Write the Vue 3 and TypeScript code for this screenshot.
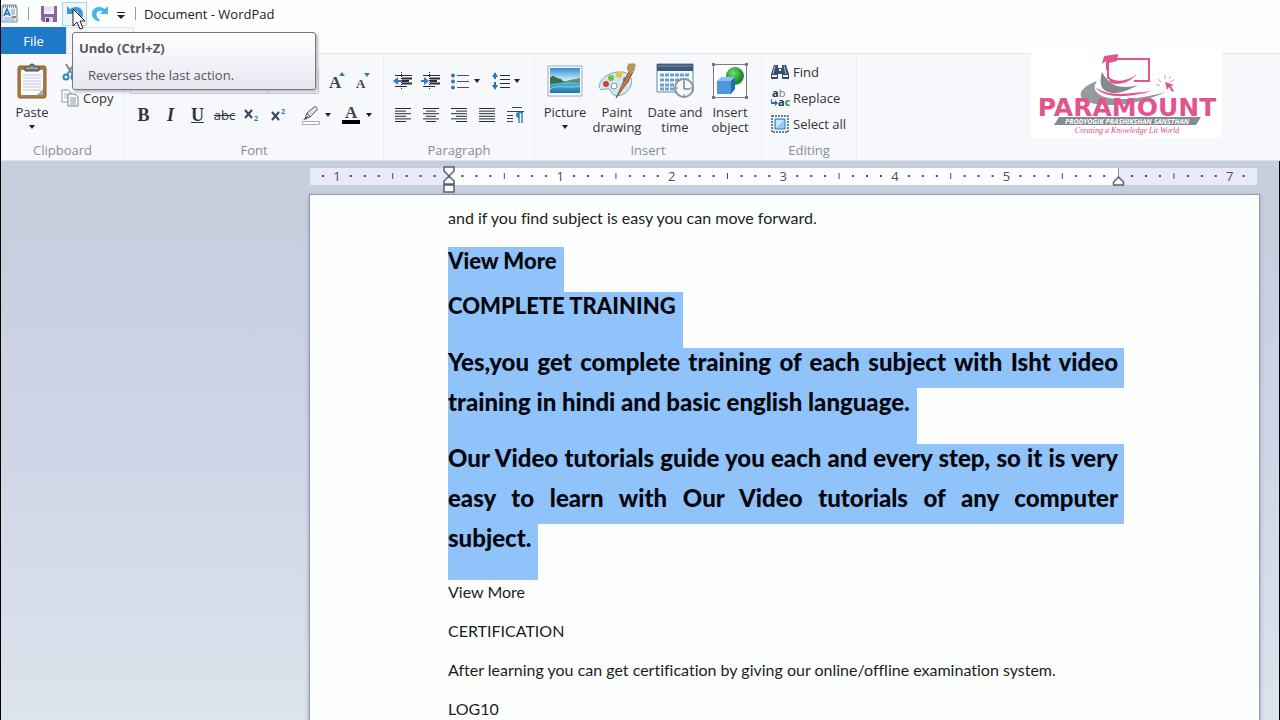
<script setup lang="ts">
interface Tick { x: number; kind: 'dot' | 'half' | 'number'; label: string }

const inch = 111.6
const origin = 138.5
const ticks: Tick[] = []
for (let i = -9; i <= 57; i++) {
  if (i === 0 || i === 48) continue
  const x = origin + (i * inch) / 8
  if (i % 8 === 0) ticks.push({ x, kind: 'number', label: String(Math.abs(i / 8)) })
  else ticks.push({ x, kind: i % 4 === 0 ? 'half' : 'dot', label: '' })
}

const selected = [
  { text: 'View More', kind: 'heading' },
  { text: 'COMPLETE TRAINING', kind: 'heading last' },
  { text: 'Yes,you get complete training of each subject with Isht video', kind: 'full' },
  { text: 'training in hindi and basic english language.', kind: 'last' },
  { text: 'Our Video tutorials guide you each and every step, so it is very', kind: 'full' },
  { text: 'easy to learn with Our Video tutorials of any computer', kind: 'full' },
  { text: 'subject.', kind: 'last' },
]

const plain = [
  'View More',
  'CERTIFICATION',
  'After learning you can get certification by giving our online/offline examination system.',
  'LOG10',
]

const aligns = [
  { name: 'Align left', rows: [[0, 16], [0, 11], [0, 16], [0, 11], [0, 16], [0, 11]] },
  { name: 'Center', rows: [[0, 16], [3, 13], [0, 16], [3, 13], [0, 16], [3, 13]] },
  { name: 'Align right', rows: [[0, 16], [5, 16], [0, 16], [5, 16], [0, 16], [5, 16]] },
  { name: 'Justify', rows: [[0, 16], [0, 16], [0, 16], [0, 16], [0, 16], [0, 16]] },
]
</script>

<template>
  <div class="window">
    <header class="titlebar">
      <svg class="app-icon" width="18" height="20" viewBox="0 0 18 20">
        <path d="M2 1h13l1 2v15H1V3z" fill="#e9f1f8" stroke="#6d8fae" />
        <path d="M2 2.500h13" stroke="#47749c" stroke-width="2" stroke-dasharray="1 1" />
        <path d="M3 12 6 5l3 7M4 10h4" fill="none" stroke="#2c6bb0" stroke-width="1.500" />
        <path d="M10 6h4M10 8h4M10 10h4M3 14h11M3 16h11" stroke="#7fa6c8" />
        <path d="M11 12h4v2h-4z" fill="#a8865c" />
      </svg>
      <span class="bar"></span>
      <button class="quick" aria-label="Save">
        <svg width="18" height="18" viewBox="0 0 18 18">
          <path d="M1 1h16v16H3l-2-2z" fill="#8a63ad" />
          <path d="M4 1h10v8H4z" fill="#f4f1f8" />
          <path d="M5 3h8M5 5h8" stroke="#d5cbe0" />
          <path d="M5 12h8v5H5z" fill="#ddd5e6" /><path d="M6 13h3v4H6z" fill="#5c4577" />
        </svg>
      </button>
      <button class="quick hot" aria-label="Undo">
        <svg width="18" height="18" viewBox="0 0 18 18">
          <path d="M1 1v8h8L6.500 6.500c3-2 6 0 6 3 0 2-1 4-3 5v2c5-1 8-4 7.500-8.500C16.500 2 9 0 4 4z" fill="#3c9bd6" />
        </svg>
      </button>
      <button class="quick redo" aria-label="Redo">
        <svg width="18" height="18" viewBox="0 0 18 18">
          <path d="M17 1v8H9l2.500-2.500c-3-2-6 0-6 3 0 2 1 4 3 5v2C3.500 15.500.5 12.500 1 8 1.500 2 9 0 14 4z" fill="#48b4ea" />
        </svg>
      </button>
      <button class="more" aria-label="Customize Quick Access Toolbar">
        <svg width="8" height="7" viewBox="0 0 8 7"><path d="M0 0h8v1H0zM0 3h8L4 7z" fill="#222" /></svg>
      </button>
      <span class="bar"></span>
      <h1>Document - WordPad</h1>
    </header>

    <nav class="tabs">
      <button class="file">File</button>
      <span class="tab"></span>
    </nav>

    <section class="ribbon">
      <div class="group clipboard">
        <div class="body">
          <button class="big paste">
            <svg width="32" height="36" viewBox="0 0 32 36">
              <rect x="2" y="3" width="28" height="32" rx="2" fill="#a97b43" stroke="#84602f" />
              <path d="M5 7h22v25H5z" fill="#fbfcfe" />
              <path d="M7 12h18M7 15h18M7 18h18M7 21h18M7 24h18M7 27h18" stroke="#b8c5d6" />
              <path d="M21 32l6-6v6z" fill="#9db0c4" />
              <path d="M9 8V4h4c0-4 6-4 6 0h4v4z" fill="#75787c" stroke="#4d5054" />
              <path d="M10 5h12" stroke="#c5c8cc" />
            </svg>
            <span>Paste</span>
            <i class="caret"></i>
          </button>
          <div class="stack">
            <button class="small" aria-label="Cut">
              <svg width="18" height="18" viewBox="0 0 18 18">
                <path d="M5 1l7 11M13 1L6 12" stroke="#7b8794" stroke-width="2" />
                <circle cx="5" cy="14" r="2.500" fill="none" stroke="#2b8ac6" stroke-width="2" />
                <circle cx="13" cy="14" r="2.500" fill="none" stroke="#2b8ac6" stroke-width="2" />
              </svg>
            </button>
            <button class="small">
              <svg width="18" height="18" viewBox="0 0 18 18">
                <path d="M1 1h6l3 3v9H1z" fill="#fff" stroke="#8e98a3" />
                <path d="M3 5h4M3 7h4M3 9h4" stroke="#aab8c8" />
                <path d="M7 5h7l3 3v9H7z" fill="#fff" stroke="#77828e" />
                <path d="M9 9h6M9 11h6M9 13h6M9 15h6" stroke="#8398b0" />
              </svg>
              <span>Copy</span>
            </button>
          </div>
        </div>
        <h2>Clipboard</h2>
      </div>

      <div class="group font">
        <div class="rows">
          <div class="row">
            <select class="family" aria-label="Font family"></select>
            <select class="size" aria-label="Font size"></select>
            <button class="tool grow" aria-label="Grow font">
              <svg width="18" height="20" viewBox="0 0 18 20">
                <text x="1" y="17" class="serif" font-size="17">A</text><path d="M11 5l3-4 3 4z" fill="#2f7cc0" />
              </svg>
            </button>
            <button class="tool shrink" aria-label="Shrink font">
              <svg width="18" height="20" viewBox="0 0 18 20">
                <text x="1" y="17" class="serif" font-size="13">A</text><path d="M9 2h6l-3 4z" fill="#2f7cc0" />
              </svg>
            </button>
          </div>
          <div class="row styles">
            <button class="tool glyph"><b>B</b></button>
            <button class="tool glyph"><em>I</em></button>
            <button class="tool glyph"><u>U</u></button>
            <button class="tool glyph strike"><s>abc</s></button>
            <button class="tool" aria-label="Subscript">
              <svg width="18" height="18" viewBox="0 0 18 18">
                <path d="M2 4l7 8M9 4l-7 8" stroke="#334660" stroke-width="2" />
                <text x="11" y="15" class="ui" font-size="7" font-weight="700" fill="#2d78bf">2</text>
              </svg>
            </button>
            <button class="tool" aria-label="Superscript">
              <svg width="18" height="18" viewBox="0 0 18 18">
                <path d="M2 6l7 8M9 6l-7 8" stroke="#334660" stroke-width="2" />
                <text x="11" y="8" class="ui" font-size="7" font-weight="700" fill="#2d78bf">2</text>
              </svg>
            </button>
            <button class="tool marker" aria-label="Text highlight color">
              <svg width="20" height="20" viewBox="0 0 20 20">
                <path d="M4 14l2-6 7-6c2-1 4 1 3 3l-7 7z" fill="#dce0e5" stroke="#596068" />
                <path d="M6 8l3 4M4 14l3-3" stroke="#596068" /><path d="M2 15l3-3 1 2z" fill="#454b52" />
                <path d="M1.500 16.500h17v3h-17z" fill="#fff" stroke="#a9adb3" />
              </svg>
            </button>
            <i class="caret"></i>
            <button class="tool color" aria-label="Text color">
              <svg width="20" height="20" viewBox="0 0 20 20">
                <text x="4" y="13" class="serif" font-size="17">A</text><path d="M1 15h18v4H1z" fill="#000" />
              </svg>
            </button>
            <i class="caret"></i>
          </div>
        </div>
        <h2>Font</h2>
      </div>

      <div class="group paragraph">
        <div class="rows">
          <div class="row">
            <button class="tool" aria-label="Decrease indent">
              <svg width="20" height="18" viewBox="0 0 20 18">
                <path d="M2 3.500h17M2 14.500h12" stroke="#252b3b" />
                <path d="M9 6.500h10M9 9h7M9 11.500h10" stroke="#252b3b" stroke-width="2" />
                <path d="M8.500 0v18" stroke="#252b3b" stroke-dasharray="1 1" />
                <path d="M0 9l5-4v3h4v2H5v3z" fill="#327fc6" />
              </svg>
            </button>
            <button class="tool" aria-label="Increase indent">
              <svg width="20" height="18" viewBox="0 0 20 18">
                <path d="M2 3.500h17M2 14.500h12" stroke="#252b3b" />
                <path d="M9 6.500h10M9 9h7M9 11.500h10" stroke="#252b3b" stroke-width="2" />
                <path d="M8.500 0v18" stroke="#252b3b" stroke-dasharray="1 1" />
                <path d="M8 9L3 5v3H0v2h3v3z" fill="#327fc6" />
              </svg>
            </button>
            <button class="tool bullets" aria-label="Start a list">
              <svg width="18" height="18" viewBox="0 0 18 18">
                <path d="M6 3.500h12M6 9.500h12M6 15.500h12" stroke="#4b5160" />
                <circle cx="2" cy="3.500" r="2" fill="#3b77b8" /><circle cx="2" cy="9.500" r="2" fill="#3b77b8" /><circle cx="2" cy="15.500" r="2" fill="#3b77b8" />
              </svg>
            </button>
            <i class="caret"></i>
            <button class="tool spacing" aria-label="Line spacing">
              <svg width="18" height="20" viewBox="0 0 18 20">
                <path d="M8 4.500h10M8 8.500h10M8 12.500h10M8 16.500h10" stroke="#252b3b" />
                <path d="M0 6l3-5 3 5H4v2H2V6zM0 14l3 5 3-5H4v-3H2v3z" fill="#2f73b7" />
              </svg>
            </button>
            <i class="caret"></i>
          </div>
          <div class="row">
            <button v-for="a in aligns" :key="a.name" class="tool" :aria-label="a.name">
              <svg width="16" height="16" viewBox="0 0 16 16">
                <path v-for="(r, i) in a.rows" :key="i" :d="`M${r[0]} ${i * 2.6 + 1.5}H${r[1]}`" stroke="#252b3b" />
              </svg>
            </button>
            <button class="tool" aria-label="Paragraph">
              <svg width="17" height="18" viewBox="0 0 17 18">
                <path d="M5 1.500h10M0 5.500h17M0 9.500h6M0 12.500h6M0 15.500h6" stroke="#39404f" />
                <path d="M15 7v10M12 7v10M16 6.500H11" stroke="#3283c8" stroke-width="1.500" /><path d="M12 6a3 3 0 000 6z" fill="#3283c8" />
              </svg>
            </button>
          </div>
        </div>
        <h2>Paragraph</h2>
      </div>

      <div class="group insert">
        <div class="body">
          <button class="big">
            <svg width="36" height="36" viewBox="0 0 36 36">
              <defs><linearGradient id="sky" x2="0" y2="1"><stop stop-color="#2f8fd4" /><stop offset=".5" stop-color="#d6eff8" /><stop offset=".6" stop-color="#55b5c8" /><stop offset="1" stop-color="#1c74b4" /></linearGradient></defs>
              <path d="M1 3h34v30H1z" fill="#fafafa" stroke="#a5a9ad" />
              <path d="M3 5h30v25H3z" fill="url(#sky)" />
              <path d="M3 15c3-4 5-1 7 0s4 0 6 3l4 1-17 2z" fill="#386f4b" /><path d="M17 19c6-3 10-2 16-4v5z" fill="#5b8d77" />
              <path d="M3 26c9-5 17 0 30-3" fill="none" stroke="#87d4df" />
            </svg>
            <span>Picture</span>
            <i class="caret"></i>
          </button>
          <button class="big">
            <svg width="38" height="36" viewBox="0 0 38 36">
              <path d="M1 24C2 14 13 8 25 9c7 1 10 7 8 13-3 9-11 12-17 10-3-1-2-5-5-6-4-1-8 3-10-2z" fill="#d2e8ef" stroke="#7ca9bc" />
              <circle cx="8" cy="21" r="3" fill="#d63c39" /><circle cx="13" cy="15" r="3" fill="#70bf3e" /><circle cx="21" cy="12" r="3" fill="#eec42d" /><circle cx="16" cy="23" r="3" fill="#fff" stroke="#6799be" /><circle cx="28" cy="17" r="3" fill="#357fc4" />
              <path d="M18 35l8-17 6-11 3 2-6 11z" fill="#c27b40" stroke="#925525" /><path d="M29 7c-1-3 2-6 1-7 3 2 5-1 7 1s-1 3 0 6l-4 4z" fill="#b69361" />
            </svg>
            <span>Paint<br />drawing</span>
          </button>
          <button class="big wide">
            <svg width="38" height="36" viewBox="0 0 38 36">
              <path d="M1 1h36v28H1z" fill="#f7fbff" stroke="#68839d" /><path d="M1 1h36v7H1z" fill="#3d597b" /><path d="M2 3h34" stroke="#7894b3" />
              <path d="M4 12h29M4 17h29M4 22h29M4 26h16" stroke="#6ba1d1" stroke-width="3" stroke-dasharray="4 1" />
              <circle cx="28" cy="25" r="9" fill="#f6f7f8" stroke="#8c949a" stroke-width="2" /><path d="M28 18v8h6" fill="none" stroke="#444b55" />
              <path d="M28 17v2M28 31v2M20 25h2M34 25h2" stroke="#81878e" />
            </svg>
            <span>Date and<br />time</span>
          </button>
          <button class="big">
            <svg width="36" height="36" viewBox="0 0 36 36">
              <defs><radialGradient id="ball" cx=".4" cy=".35"><stop stop-color="#78df63" /><stop offset="1" stop-color="#159232" /></radialGradient></defs>
              <path d="M1.500 1.500h33v33h-33z" fill="#fff" stroke="#7a7e82" /><path d="M0 0h3v3H0zM33 0h3v3h-3zM0 33h3v3H0zM33 33h3v3h-3z" fill="#73787d" />
              <circle cx="23" cy="13" r="9" fill="url(#ball)" />
              <path d="M5 18l4-4h14l-4 4z" fill="#8fc2ef" /><path d="M5 18h14v13H5z" fill="#4d97e0" /><path d="M19 18l4-4v12l-4 5z" fill="#236cb9" />
            </svg>
            <span>Insert<br />object</span>
          </button>
        </div>
        <h2>Insert</h2>
      </div>

      <div class="group editing">
        <div class="stack">
          <button class="small">
            <svg width="18" height="18" viewBox="0 0 18 18">
              <path d="M3 2h4v3h4V2h4l3 9v5h-7v-5H7v5H0v-5z" fill="#394f6e" />
              <path d="M4 3l-2 8M13 3l2 8" stroke="#a9c0d7" /><path d="M1 13h5M12 13h5M8 7h2" stroke="#e4edf5" stroke-width="2" />
            </svg>
            <span>Find</span>
          </button>
          <button class="small">
            <svg width="18" height="18" viewBox="0 0 18 18">
              <text x="1" y="8" class="ui" font-size="11" font-weight="700" fill="#24334c">a<tspan font-weight="400" fill="#777f8a">b</tspan></text>
              <text x="7" y="17" class="ui" font-size="11" font-weight="700" fill="#24334c">a<tspan fill="#239741">c</tspan></text>
              <path d="M1 10v3h3v-2l3 3-3 3v-2H0v-5z" fill="#286eb8" />
            </svg>
            <span>Replace</span>
          </button>
          <button class="small">
            <svg width="18" height="18" viewBox="0 0 18 18">
              <path d="M1 1h16v16H1z" fill="none" stroke="#305d87" stroke-width="1.500" stroke-dasharray="2 1" />
              <path d="M4 4h10v10H4z" fill="#9bcdf4" stroke="#2b79bd" /><path d="M5 5h8L5 13z" fill="#cae7fb" />
            </svg>
            <span>Select all</span>
          </button>
        </div>
        <h2>Editing</h2>
      </div>
    </section>

    <main class="workspace">
      <svg class="ruler" width="948" height="25" viewBox="0 0 948 25">
        <path d="M0 0h947v17H0z" fill="#e8ebf7" />
        <path d="M138 0h670v17H138z" fill="#fdfeff" />
        <template v-for="t in ticks" :key="t.x">
          <text v-if="t.kind === 'number'" :x="t.x" y="13" text-anchor="middle" class="ui" font-size="13" fill="#4a4d5c">{{ t.label }}</text>
          <path v-else-if="t.kind === 'half'" :d="`M${t.x} 5v6`" stroke="#4a4d5c" />
          <path v-else :d="`M${t.x - 1} 8h2`" stroke="#4a4d5c" stroke-width="2" />
        </template>
        <path d="M134 -1h10v4l-5 5-5-5zM139 8l5 5v3h-10v-3zM134 17h10v7h-10z" fill="#fff" stroke="#5b5f6c" stroke-width="1.500" />
        <path d="M808.500 0v9" stroke="#8b8f9a" /><path d="M808.500 9l5 5v3h-10v-3z" fill="#fff" stroke="#5b5f6c" stroke-width="1.500" />
      </svg>
      <article class="page">
        <p>and if you find subject is easy you can move forward.</p>
        <div class="selection">
          <div v-for="line in selected" :key="line.text" :class="['line', line.kind]">{{ line.text }}</div>
        </div>
        <p v-for="t in plain" :key="t">{{ t }}</p>
      </article>
    </main>

    <aside class="tooltip" role="tooltip">
      <strong>Undo (Ctrl+Z)</strong>
      <span>Reverses the last action.</span>
    </aside>
    <svg class="cursor" width="14" height="22" viewBox="0 0 14 22">
      <path d="M1 1v17l4-4 3 7 3-1-3-7h5z" fill="#fff" stroke="#222" />
    </svg>

    <svg class="logo" width="191" height="86" viewBox="0 0 191 86">
      <path d="M0 0h191v86H0z" fill="#fff" />
      <path d="M73 4l14-2-1 7-8 2v8l-3-1v-9l-4 3z" fill="#e1558f" />
      <path d="M77 9v18M77 7h41v22H103" fill="none" stroke="#e1558f" stroke-width="2" />
      <path d="M66 29c-22 8-24 22 8 24 22 1 47-6 60-13-26 8-53 9-63 4-7-4-10-8-5-15z" fill="#959a9e" />
      <path d="M71 20c-4 15 1 21 14 21 8-1 15-4 22-8-14 4-28 3-36-13z" fill="#85898e" />
      <path d="M78 25c7 7 21 3 28-3-5 6-12 10-21 10-5 0-8-3-7-7zM64 35c15 11 36 6 57 4-18 5-46 10-57-4z" fill="#e1558f" />
      <path d="M134 30l9 3-3 1 3 5-2 1-3-5-2 3z" fill="#e1558f" />
      <path d="M134 23v4M127 27l3 3M125 33h4M140 24l-2 3M143 28l-4 2" stroke="#e790b3" />
      <text x="96" y="64" text-anchor="middle" class="brand" font-size="25">PARAMOUNT</text>
      <path d="M28 65h142l-5 8H23z" fill="#858b90" />
      <text x="96" y="72" text-anchor="middle" class="banner" font-size="7">PRODYOGIK PRASHIKSHAN SANSTHAN</text>
      <text x="96" y="81" text-anchor="middle" class="slogan" font-size="8">Creating a Knowledge Lit World</text>
    </svg>
  </div>
</template>

<style>
body { margin: 0; overflow: hidden; }
</style>

<style scoped>
.window {
  position: relative; display: flex; flex-direction: column; height: 100vh; box-sizing: border-box;
  border-left: 1px solid #000; overflow: hidden; background: #fdfefe; color: #333;
  font: 13px/16px "Open Sans", "Noto Sans", sans-serif;
}
h1, h2, p { margin: 0; font-weight: 400; }
button { padding: 0; border: 0; background: none; color: inherit; font: inherit; }
svg { display: block; flex: none; overflow: visible; }
.ui { font-family: "Open Sans", sans-serif; }
.serif { font-family: "Liberation Serif", serif; font-weight: 700; fill: #40444c; }

.titlebar { display: flex; align-items: center; height: 27px; flex: none; }
.app-icon { margin-right: 9px; }
.bar { width: 1px; height: 13px; background: #999; }
.quick { display: grid; place-items: center; width: 25px; height: 24px; box-sizing: border-box; }
.quick:first-of-type { margin: 0 1px 0 7px; }
.hot { border: 1px solid #a9d1ef; background: #eef6fd; }
.more { margin: 3px 10px 0 5px; }
.titlebar h1 { margin-left: 8px; font-size: 13px; line-height: 18px; color: #222; }

.tabs { display: flex; height: 27px; flex: none; border-bottom: 1px solid #e3e6e8; box-sizing: border-box; }
.file { width: 65px; height: 27px; background: #1f7bc9; color: #fff; }
.tab { width: 66px; border: 1px solid #dfe2e5; border-bottom: 0; background: #f6f7fb; }

.ribbon { display: flex; height: 107px; flex: none; background: #f6f8fc; border-bottom: 1px solid #dfe5ec; box-sizing: border-box; }
.group { display: flex; flex-direction: column; justify-content: space-between; box-sizing: border-box; border-right: 1px solid #e9ecf1; }
.group h2 { text-align: center; font-size: 13px; line-height: 16px; color: #8b8d92; margin-bottom: 2px; }
.clipboard { width: 124px; }
.font { width: 259px; }
.paragraph { width: 151px; }
.insert { width: 227px; }
.editing { width: 95px; }
.body { display: flex; padding: 9px 4px 0; }
.big { display: flex; flex-direction: column; align-items: center; width: 52px; line-height: 15px; }
.big svg { height: 36px; margin-bottom: 6px; }
.big .caret { margin-top: 5px; }
.big.wide { width: 64px; }
.big.wide + .big { width: 46px; }
.paste { width: 54px; }
.paste + .stack { margin-left: 2px; }
.caret { width: 0; height: 0; flex: none; border: 3px solid transparent; border-top: 4px solid #222; border-bottom: 0; }
.stack { display: flex; flex-direction: column; gap: 8px; }
.small { display: flex; align-items: center; gap: 4px; height: 18px; }
.editing .stack { padding: 9px 0 0 9px; }

.rows { display: flex; flex-direction: column; gap: 8px; padding: 14px 5px 0; }
.row { display: flex; align-items: center; height: 26px; }
.family, .size { height: 26px; box-sizing: border-box; border: 1px solid #c5c8cc; background: #fdfdfe; appearance: none; margin: 0; }
.family { width: 141px; }
.size { width: 50px; border-left: 0; }
.tool { display: grid; place-items: center; width: 28px; height: 24px; }
.grow { margin-left: 4px; }
.styles .tool { width: 27px; }
.styles .marker { margin-left: 5px; }
.styles .color { margin-left: 6px; }
.styles .color + .caret { margin-left: 2px; }
.styles .caret { margin-left: 1px; }
.glyph { font-family: "Liberation Serif", serif; font-size: 18px; font-weight: 700; line-height: 20px; color: #30343d; }
.strike { font-family: "Open Sans", sans-serif; font-size: 13px; font-weight: 400; }
.bullets { margin-left: 1px; }
.spacing { margin-left: 8px; }
.paragraph .spacing { width: 26px; }

.workspace { flex: 1; min-height: 0; display: flex; flex-direction: column; padding: 7px 20px 0 309px; border-right: 1px solid #000; background: linear-gradient(#c5cfdd, #c8cfe0 100px, #d0d6e7 300px, #d7dde9 440px, #dce4ed); overflow: hidden; }
.ruler { margin-bottom: 2px; }
.page { flex: 1; min-height: 0; padding: 11px 141px 0 138px; background: #fdfefe; box-shadow: 0 0 1px 1px #929bac, 0 3px 5px 1px #a4aec3; }
.page p { font: 16px/24px Lato, "Open Sans", sans-serif; font-variant-ligatures: none; color: #1c1c1c; white-space: nowrap; margin-bottom: 15px; }
.page p:first-child { margin-bottom: 17px; }
.line { width: fit-content; box-sizing: border-box; padding: 0 7px 28px 0; background: #90c3f9; color: #05070d; font: 900 24px/28px Lato, "Open Sans", sans-serif; white-space: nowrap; }
.line.heading { padding-bottom: 17px; font-size: 22px; }
.line.heading.last { padding-bottom: 28px; }
.line.full { width: calc(100% + 6px); padding-right: 6px; padding-bottom: 12px; text-align: justify; text-align-last: justify; white-space: normal; }

.tooltip { position: absolute; left: 71px; top: 32px; width: 244px; height: 58px; box-sizing: border-box; display: flex; flex-direction: column; gap: 11px; padding: 7px 6px 0; border: 1px solid #77777d; border-radius: 3px; background: linear-gradient(#fff, #e7e7f2); box-shadow: 2px 2px 3px #b9bbc2; color: #55565c; }
.tooltip span { padding-left: 9px; }
.cursor { position: absolute; left: 71px; top: 8px; }
.logo { position: absolute; right: 58px; top: 52px; }
.brand { font-family: "DejaVu Sans", sans-serif; font-weight: 700; fill: #e1558f; }
.banner { font-family: "Open Sans", sans-serif; font-weight: 700; font-style: italic; fill: #fff; }
.slogan { font-family: "Liberation Serif", serif; font-style: italic; fill: #d94d81; }
</style>
